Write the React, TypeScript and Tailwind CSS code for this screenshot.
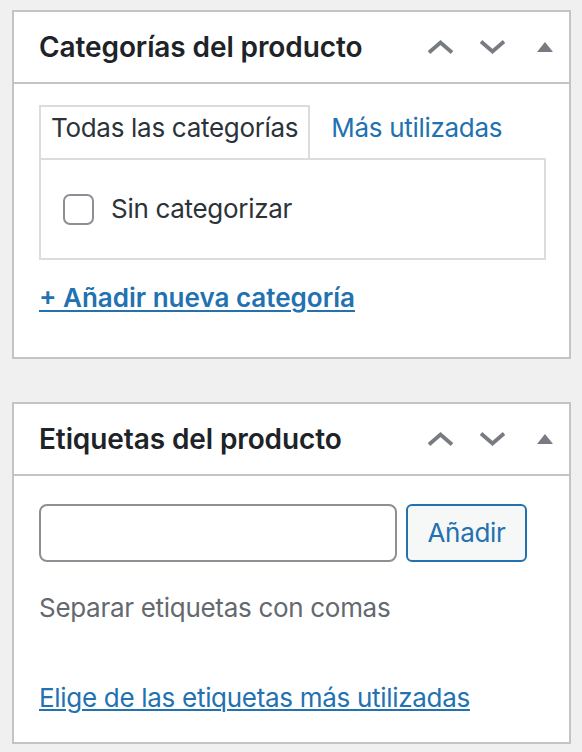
import React from "react";

const ICON = "#787c82";

function ChevronUp() {
  return (
    <svg width="27" height="14" viewBox="0 0 27 14" className="block">
      <polyline points="2,12.5 13.5,2.5 25,12.5" fill="none" stroke={ICON} strokeWidth="3.8" strokeLinejoin="miter" />
    </svg>
  );
}
function ChevronDown() {
  return (
    <svg width="27" height="14" viewBox="0 0 27 14" className="block">
      <polyline points="2,1.5 13.5,11.5 25,1.5" fill="none" stroke={ICON} strokeWidth="3.8" strokeLinejoin="miter" />
    </svg>
  );
}
function Triangle() {
  return (
    <svg width="16" height="10" viewBox="0 0 16 10" className="block">
      <polygon points="0,10 8,0 16,10" fill={ICON} />
    </svg>
  );
}

function Header({ title }: { title: string }) {
  return (
    <div className="flex h-[72px] items-center justify-between border-b-2 border-[#c3c4c7] pl-[25px] pr-[16px]">
      <h2 className="text-[28px] font-semibold leading-[36px] tracking-[-0.1px] text-[#1d2327]">{title}</h2>
      <div className="flex items-center">
        <ChevronUp />
        <div className="ml-[25px]">
          <ChevronDown />
        </div>
        <div className="ml-[31px]">
          <Triangle />
        </div>
      </div>
    </div>
  );
}

export default function App() {
  return (
    <div
      className="min-h-screen bg-[#f0f0f1] pl-[12px] pr-[11px] pt-[10px] pb-[9px]"
      style={{ fontFamily: "Inter, Roboto, 'Liberation Sans', sans-serif" }}
    >
      <div className="border-2 border-[#c3c4c7] bg-white">
        <Header title="Categorías del producto" />
        <div className="pl-[25px] pr-[23px] pt-[21px] pb-[41px]">
          <div className="flex items-start">
            <div className="relative z-10 -mb-[2px] h-[53px] border-2 border-b-0 border-[#dcdcde] bg-white px-[10px] pt-[3px] text-[26px] leading-[36px] tracking-[-0.3px] text-[#2c3338]">
              Todas las categorías
            </div>
            <div className="ml-[9px] h-[53px] border-2 border-transparent px-[10px] pt-[3px] text-[26px] leading-[36px] tracking-[-0.3px] text-[#2271b1]">
              Más utilizadas
            </div>
          </div>
          <div className="flex h-[102px] items-center border-2 border-[#dcdcde] px-[22px]">
            <span className="h-[31px] w-[31px] rounded-[7px] border-2 border-[#8c8f94] bg-white" />
            <span className="ml-[17px] text-[26px] leading-[36px] tracking-[-0.3px] text-[#2c3338]">Sin categorizar</span>
          </div>
          <div className="mt-[20px] text-[26px] leading-[36px]">
            <a href="#" className="font-semibold text-[#2271b1] underline decoration-2 underline-offset-[3px]">
              + Añadir nueva categoría
            </a>
          </div>
        </div>
      </div>

      <div className="mt-[43px] border-2 border-[#c3c4c7] bg-white">
        <Header title="Etiquetas del producto" />
        <div className="pl-[25px] pr-[23px] pt-[28px] pb-[26px]">
          <div className="flex items-center">
            <div className="h-[58px] w-[358px] rounded-[8px] border-2 border-[#8c8f94] bg-white" />
            <button className="ml-[9px] h-[58px] w-[121px] rounded-[6px] border-2 border-[#2271b1] bg-[#f6f7f7] text-[26px] leading-[36px] tracking-[-0.3px] text-[#2271b1]">
              Añadir
            </button>
          </div>
          <p className="mt-[28px] text-[26px] leading-[36px] tracking-[-0.3px] text-[#646970]">Separar etiquetas con comas</p>
          <div className="mt-[54px] text-[26px] leading-[36px] tracking-[-0.3px]">
            <a href="#" className="text-[#2271b1] underline decoration-2 underline-offset-[2px]">
              Elige de las etiquetas más utilizadas
            </a>
          </div>
        </div>
      </div>
    </div>
  );
}
